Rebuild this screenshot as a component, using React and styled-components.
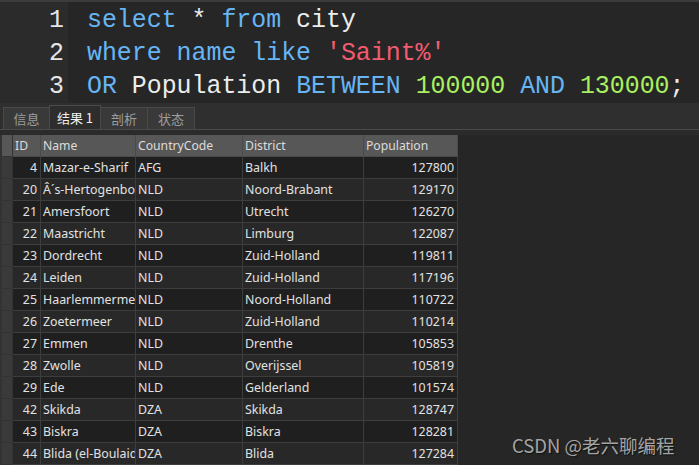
import React from "react";
import styled, { createGlobalStyle } from "styled-components";

const Global = createGlobalStyle`
  html, body { margin: 0; padding: 0; background: #262626; }
  body { width: 699px; height: 465px; overflow: hidden; }
  * { box-sizing: border-box; }
`;

const Page = styled.div`
  position: relative;
  width: 699px;
  height: 465px;
  background: #262626;
  display: flex;
  flex-direction: column;
  overflow: hidden;
`;

const Editor = styled.div`
  display: flex;
  height: 103px;
  border-top: 2px solid #3c3c3c;
  background: #262626;
`;

const Gutter = styled.div`
  width: 68px;
  background: #2b2b2b;
  padding: 2px 4px 0 0;
  display: flex;
  flex-direction: column;
  align-items: flex-end;
`;

const Code = styled.div`
  flex: 1;
  padding: 2px 0 0 19px;
  display: flex;
  flex-direction: column;
`;

const Line = styled.div`
  height: 33px;
  line-height: 33px;
  font-family: "Liberation Mono", "DejaVu Sans Mono", monospace;
  font-size: 24.9px;
  color: #e6e6e6;
  white-space: pre;
`;

const Tok = styled.span`
  color: ${(p) =>
    p.$k === "kw" ? "#66b5f4" : p.$k === "str" ? "#f25c70" : p.$k === "num" ? "#a9f060" : "#ececec"};
`;

const TabBar = styled.div`
  height: 27px;
  background: #2f2f2f;
  display: flex;
  align-items: flex-end;
  padding-left: 3px;
  border-bottom: 1px solid #4a4a4a;
`;

const Tab = styled.div`
  width: ${(p) => p.$w}px;
  height: ${(p) => (p.$active ? 24 : 22)}px;
  display: flex;
  align-items: center;
  justify-content: center;
  font-family: "Noto Sans CJK SC", "Noto Sans", sans-serif;
  font-size: 13px;
  color: ${(p) => (p.$active ? "#f0f0f0" : "#9c9c9c")};
  background: ${(p) => (p.$active ? "#2d2d2d" : "#393939")};
  border: 1px solid #4a4a4a;
  border-bottom: none;
  margin-right: -1px;
  padding-bottom: 1px;
`;

const Spacer = styled.div`
  height: 5px;
  background: #2b2b2b;
`;

const Table = styled.div`
  display: flex;
  flex-direction: column;
  width: 458px;
`;

const Row = styled.div`
  display: flex;
  height: 22px;
`;

const Cell = styled.div`
  width: ${(p) => p.$w}px;
  height: 22px;
  flex: none;
  border-right: 1px solid #3d3d3d;
  border-bottom: 1px solid #3d3d3d;
  padding: 0 ${(p) => (p.$right ? 3 : 2)}px 0 2px;
  display: flex;
  align-items: center;
  justify-content: ${(p) => (p.$right ? "flex-end" : "flex-start")};
  white-space: nowrap;
  overflow: hidden;
  font-family: "Noto Sans", "Noto Sans CJK SC", sans-serif;
  font-size: 12.4px;
  color: #e2e2e2;
  background: ${(p) => p.$bg};
`;

const HeadCell = styled(Cell)`
  background: #575757;
  color: #dcdcdc;
  font-size: 12.2px;
  border-right-color: #4a4a4a;
  border-bottom-color: #4a4a4a;
`;

const Indicator = styled.div`
  width: 13px;
  height: 22px;
  flex: none;
  background: ${(p) => (p.$head ? "#575757" : "#3a3a3a")};
  border-left: 2px solid #333;
  border-right: 1px solid #333;
  border-bottom: 1px solid #333;
`;

const Watermark = styled.div`
  position: absolute;
  left: 512px;
  top: 432px;
  font-family: "Noto Sans CJK SC", "Noto Sans", sans-serif;
  font-size: 18.5px;
  color: #a4a4a4;
  text-shadow: 1px 1px 1px #111;
`;

const cols = [
  { w: 28, right: true, label: "ID" },
  { w: 95, label: "Name" },
  { w: 107, label: "CountryCode" },
  { w: 121, label: "District" },
  { w: 94, right: true, label: "Population" },
];

const rows = [
  ["4", "Mazar-e-Sharif", "AFG", "Balkh", "127800"],
  ["20", "Â´s-Hertogenbosch", "NLD", "Noord-Brabant", "129170"],
  ["21", "Amersfoort", "NLD", "Utrecht", "126270"],
  ["22", "Maastricht", "NLD", "Limburg", "122087"],
  ["23", "Dordrecht", "NLD", "Zuid-Holland", "119811"],
  ["24", "Leiden", "NLD", "Zuid-Holland", "117196"],
  ["25", "Haarlemmermeer", "NLD", "Noord-Holland", "110722"],
  ["26", "Zoetermeer", "NLD", "Zuid-Holland", "110214"],
  ["27", "Emmen", "NLD", "Drenthe", "105853"],
  ["28", "Zwolle", "NLD", "Overijssel", "105819"],
  ["29", "Ede", "NLD", "Gelderland", "101574"],
  ["42", "Skikda", "DZA", "Skikda", "128747"],
  ["43", "Biskra", "DZA", "Biskra", "128281"],
  ["44", "Blida (el-Boulaida)", "DZA", "Blida", "127284"],
];

const lines = [
  [["kw", "select"], ["t", " * "], ["kw", "from"], ["t", " city"]],
  [["kw", "where name like "], ["str", "'Saint%'"]],
  [["kw", "OR"], ["t", " Population "], ["kw", "BETWEEN"], ["t", " "], ["num", "100000"], ["t", " "], ["kw", "AND"], ["t", " "], ["num", "130000"], ["t", ";"]],
];

const tabs = [
  { label: "信息", w: 47 },
  { label: "结果 1", w: 52, active: true },
  { label: "剖析", w: 48 },
  { label: "状态", w: 48 },
];

export default function App() {
  return (
    <Page>
      <Global />
      <Editor>
        <Gutter>
          {[1, 2, 3].map((n) => (
            <Line key={n}>{n}</Line>
          ))}
        </Gutter>
        <Code>
          {lines.map((l, i) => (
            <Line key={i}>
              {l.map(([k, t], j) => (
                <Tok key={j} $k={k}>
                  {t}
                </Tok>
              ))}
            </Line>
          ))}
        </Code>
      </Editor>
      <TabBar>
        {tabs.map((t) => (
          <Tab key={t.label} $w={t.w} $active={t.active}>
            {t.label}
          </Tab>
        ))}
      </TabBar>
      <Spacer />
      <Table>
        <Row>
          <Indicator $head />
          {cols.map((c) => (
            <HeadCell key={c.label} $w={c.w}>
              {c.label}
            </HeadCell>
          ))}
        </Row>
        {rows.map((r, i) => (
          <Row key={r[0]}>
            <Indicator />
            {r.map((v, j) => (
              <Cell key={j} $w={cols[j].w} $right={cols[j].right} $bg={i % 2 === 0 ? "#1f1f1f" : "#282828"}>
                {v}
              </Cell>
            ))}
          </Row>
        ))}
      </Table>
      <Watermark>CSDN @老六聊编程</Watermark>
    </Page>
  );
}
